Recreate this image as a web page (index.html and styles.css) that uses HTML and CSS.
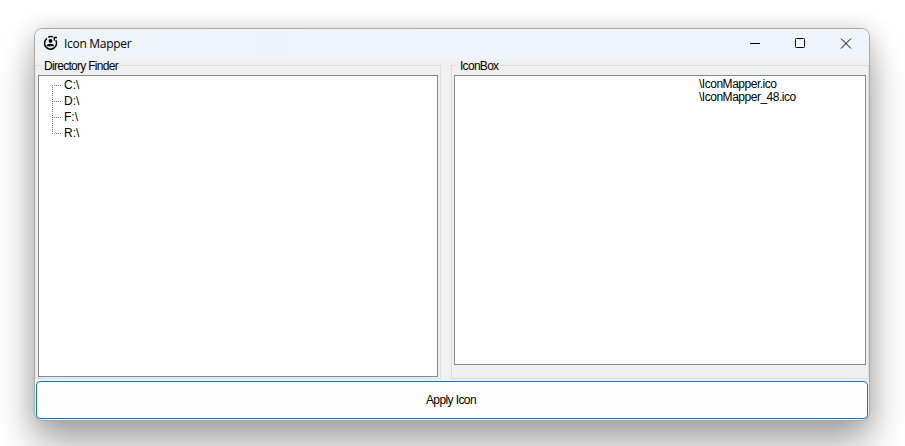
FILE: index.html
```html
<!DOCTYPE html>
<html lang="en">
<head>
<meta charset="utf-8">
<title>Icon Mapper</title>
<link rel="stylesheet" href="styles.css">
</head>
<body>
<main class="window">
  <header class="titlebar">
    <svg class="app-icon" width="16" height="16" viewBox="0 0 16 16">
      <path d="M4 3.3A6 6 0 1 0 12.8 5.2" fill="none" stroke="#000" stroke-width="1.5"/>
      <path d="M5.3 2q2.2-1 4.6-.2" fill="none" stroke="#000" stroke-width="1.4"/>
      <path d="M11.3 5.4V2.5H14" fill="none" stroke="#000" stroke-width="1.4"/>
      <circle cx="7.5" cy="5.9" r="1.9"/>
      <path d="M3.8 11.2c0-1.8 1.6-2.5 3.7-2.5s3.7.7 3.7 2.5z"/>
    </svg>
    <h1 class="title">Icon Mapper</h1>
    <div class="controls">
      <svg width="46" height="30" viewBox="0 0 46 30"><path d="M18 14.5h10"/></svg>
      <svg width="46" height="30" viewBox="0 0 46 30"><rect x="17.5" y="9.5" width="9" height="9" rx="1"/></svg>
      <svg width="46" height="30" viewBox="0 0 46 30"><path d="M17 9.5l10 10M27 9.5l-10 10"/></svg>
    </div>
  </header>
  <div class="panels">
    <section class="group">
      <h2 class="caption">Directory Finder</h2>
      <div class="box tree">
        <svg class="lines" width="10" height="50" viewBox="0 0 10 50">
          <path d="M.5 0v49M0 .5h10M0 16.5h10M0 32.5h10M0 48.5h10"/>
        </svg>
        <ul class="drives"><li>C:\</li><li>D:\</li><li>F:\</li><li>R:\</li></ul>
      </div>
    </section>
    <section class="group icons">
      <h2 class="caption">IconBox</h2>
      <ul class="box files"><li>\IconMapper.ico</li><li>\IconMapper_48.ico</li></ul>
    </section>
  </div>
  <button class="apply">Apply Icon</button>
</main>
</body>
</html>
```
FILE: styles.css
```css
* { box-sizing: border-box; }
body {
  margin: 0;
  padding: 28px 35px 0 34px;
  height: 446px;
  overflow: hidden;
  background: #fff;
  font: 12px/13px "Liberation Sans", Arial, sans-serif;
  letter-spacing: -.48px;
  color: #000;
}
ul { list-style: none; margin: 0; padding: 0; }
h1, h2 { margin: 0; font-weight: 400; }
.window {
  width: 836px;
  height: 393px;
  display: flex;
  flex-direction: column;
  border: 1px solid #aaa;
  border-radius: 8px;
  background: #f0f0f0;
  box-shadow: 0 26px 40px rgba(0, 0, 0, .3), 0 2px 24px rgba(0, 0, 0, .18);
}
.titlebar {
  height: 30px;
  flex: none;
  display: flex;
  padding-left: 8px;
  border-radius: 7px 7px 0 0;
  background: linear-gradient(90deg, #eef4f7, #eff3fb 50%, #eff3fb);
}
.app-icon { margin-top: 6px; }
.title {
  margin: 7px 0 0 5px;
  font: 12px/16px "Open Sans", "Noto Sans", sans-serif;
  letter-spacing: -.3px;
}
.controls { display: flex; margin: 0 -1px 0 auto; }
.controls svg { fill: none; stroke: #000; stroke-width: 1; }
.panels {
  display: flex;
  gap: 10px;
  height: 320px;
  padding-top: 6px;
}
.group {
  width: 406px;
  border: 1px solid #dcdcdc;
  border-left-color: #e4e4e4;
  padding: 0 2px;
}
.icons { width: 418px; border-left-color: #dcdcdc; }
.caption {
  width: fit-content;
  margin: -6px 0 0 3px;
  padding: 0 3px;
  font: inherit;
  letter-spacing: -.71px;
  background: #f0f0f0;
}
.box { border: 1px solid #828790; background: #fff; margin-top: 2px; }
.tree { width: 400px; height: 302px; display: flex; padding: 1px 0 0 13px; }
.lines { margin-top: 8px; fill: none; stroke: #777; stroke-dasharray: 1 1; }
.drives { line-height: 16px; padding-left: 2px; letter-spacing: 0; }
.files { width: 412px; height: 290px; padding: 2px 0 0 244px; }
.apply {
  width: 832px;
  height: 38px;
  margin: 2px 0 0 1px;
  padding: 0 2px 0 0;
  border: 1px solid #0078d4;
  border-radius: 4px;
  background: #fdfdfd;
  font: inherit;
  letter-spacing: -.6px;
  color: #000;
}
```
